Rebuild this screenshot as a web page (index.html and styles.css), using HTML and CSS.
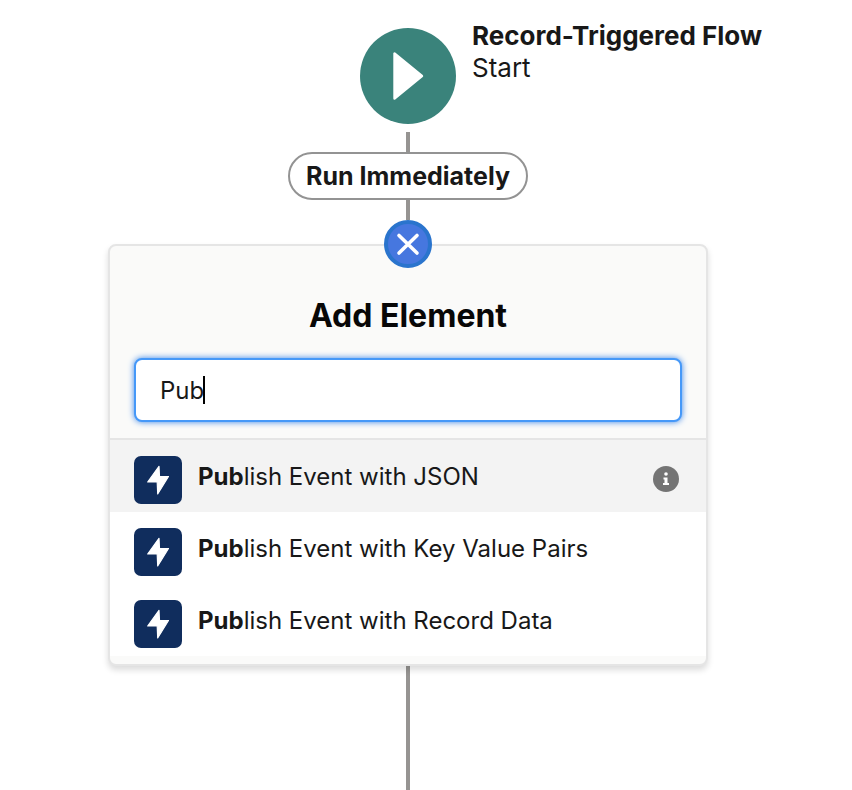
FILE: index.html
```
<!DOCTYPE html>
<html lang="en">
<head>
<meta charset="utf-8">
<meta name="viewport" content="width=device-width, initial-scale=1">
<title>Flow Builder</title>
<link rel="stylesheet" href="styles.css">
</head>
<body>
<main class="flow">
  <header class="start">
    <svg class="start-icon" viewBox="0 0 96 96" aria-hidden="true"><circle cx="48" cy="48" r="48" fill="#3a837b"/><path d="M34.500 25.500v45L62 48z" fill="#fff" stroke="#fff" stroke-width="2.400" stroke-linejoin="round"/></svg>
    <div class="start-label"><h1>Record-Triggered Flow</h1><p>Start</p></div>
  </header>
  <div class="line"></div>
  <div class="path">Run Immediately</div>
  <div class="line"></div>
  <section class="panel">
    <button class="close" type="button" aria-label="Close"><svg viewBox="0 0 48 48" aria-hidden="true"><path d="M15 15.500l18 17.500M33 15.500L15 33" stroke="#fff" stroke-width="3.600" stroke-linecap="round"/></svg></button>
    <div class="search">
      <h2><label for="search">Add Element</label></h2>
      <div class="field"><input id="search" type="text" value="Pub" autocomplete="off"><span class="caret"></span></div>
    </div>
    <ul class="results">
      <li class="active"><svg class="action" viewBox="0 0 48 48" aria-hidden="true"><path d="M25 10.300L13.700 26h9.500L23.700 38L34.500 20.500H25.500z" fill="#fff" stroke="#fff" stroke-width="1.200" stroke-linejoin="round"/></svg><span class="name"><b>Pub</b>lish Event with JSON</span>
        <button class="info" type="button" aria-label="More information"><svg viewBox="0 0 26 26" aria-hidden="true"><circle cx="13" cy="13" r="13" fill="#747474"/><circle cx="13" cy="8" r="1.800" fill="#fff"/><path d="M10.500 11.500h4v5.500h1.500v2h-6v-2h1.500v-3.500h-1z" fill="#fff"/></svg></button></li>
      <li><svg class="action" viewBox="0 0 48 48" aria-hidden="true"><path d="M25 10.300L13.700 26h9.500L23.700 38L34.500 20.500H25.500z" fill="#fff" stroke="#fff" stroke-width="1.200" stroke-linejoin="round"/></svg><span class="name"><b>Pub</b>lish Event with Key Value Pairs</span></li>
      <li><svg class="action" viewBox="0 0 48 48" aria-hidden="true"><path d="M25 10.300L13.700 26h9.500L23.700 38L34.500 20.500H25.500z" fill="#fff" stroke="#fff" stroke-width="1.200" stroke-linejoin="round"/></svg><span class="name"><b>Pub</b>lish Event with Record Data</span></li>
    </ul>
  </section>
  <div class="line tail"></div>
</main>
</body>
</html>
```
FILE: styles.css
```
* { box-sizing: border-box; }
body { margin: 0; background: #fff; color: #181818; font-family: Inter, "Liberation Sans", sans-serif; font-size: 24px; line-height: 32px; }
h1, h2, p, ul { margin: 0; padding: 0; }
.flow { display: flex; flex-direction: column; align-items: center; min-height: 100vh; padding: 20px 36px 0 0; }
.start { display: grid; grid-template-columns: 1fr 96px 1fr; column-gap: 16px; width: 100%; padding-top: 8px; }
.start-icon { grid-column: 2; width: 96px; height: 96px; margin-bottom: 8px; }
.start-label { margin-top: -8px; font-size: 26px; white-space: nowrap; }
h1 { font-size: 26px; line-height: 32px; font-weight: 700; }
.line { width: 4px; height: 20px; background: #969492; }
.path { height: 48px; padding: 0 16px; border: 2px solid #939393; border-radius: 24px; font-size: 25px; line-height: 44px; font-weight: 700; }
.panel { position: relative; width: calc(100% - 216px); max-width: 600px; margin-top: 24px; padding-bottom: 8px; background: #fafaf9; border: 2px solid #e5e5e5; border-radius: 8px; box-shadow: 0 4px 6px rgba(0,0,0,.14); }
.close { position: absolute; top: -26px; left: 50%; width: 48px; height: 48px; margin-left: -24px; padding: 0; background: #4677df; border: 4px solid #2a74cd; border-radius: 50%; }
.close svg { display: block; margin: -4px; width: 48px; height: 48px; }
.search { padding: 48px 24px 16px; border-bottom: 2px solid #e5e5e5; }
h2 { padding-top: 2px; margin-bottom: 22px; color: #080707; font-size: 32px; line-height: 40px; font-weight: 700; text-align: center; }
.field { position: relative; }
input { display: block; width: 100%; height: 64px; padding: 0 24px; background: #fff; border: 2px solid #4598f8; border-radius: 8px; outline: 0; box-shadow: 0 0 6px #3a86e8; color: #181818; font: inherit; }
.caret { position: absolute; left: 69px; top: 18px; width: 2px; height: 28px; background: #000; }
.results { list-style: none; background: #fff; }
li { display: flex; align-items: center; gap: 16px; height: 72px; padding: 8px 24px 0; }
.active { background: #f3f3f3; }
.action { flex: none; width: 48px; height: 48px; background: #102d5d; border-radius: 7px; }
.name { flex: 1; margin-bottom: 6px; }
.info { width: 26px; height: 26px; margin: 0 3px 2px 0; padding: 0; border: 0; background: none; }
.info svg { display: block; width: 26px; height: 26px; }
.tail { flex: 1 0 auto; height: auto; }
```
